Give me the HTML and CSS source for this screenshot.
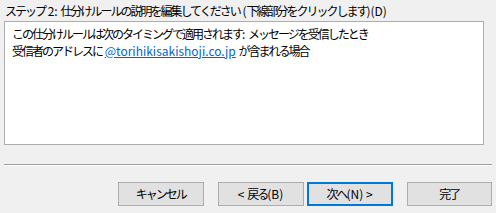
FILE: index.html
```html
<!DOCTYPE html>
<html lang="ja">
<head>
<meta charset="utf-8">
<link rel="stylesheet" href="styles.css">
</head>
<body>
<div class="dialog">
  <div class="label"><span class="ja">ステップ</span> 2: <span class="ja">仕分けルールの説明を編集してください</span> (<span class="ja">下線部分をクリックします</span>)(D)</div>
  <div class="box">
    <div class="line"><span class="ja">この仕分けルールは次のタイミングで適用されます</span>: <span class="ja">メッセージを受信したとき</span></div>
    <div class="line"><span class="ja">受信者のアドレスに</span> <a class="link">@torihikisakishoji.co.jp</a> <span class="ja">が含まれる場合</span></div>
  </div>
  <div class="sep"></div>
  <div class="buttons">
    <button class="btn"><span class="ja">キャンセル</span></button>
    <div class="pair">
      <button class="btn">&lt; <span class="ja">戻る</span>(B)</button>
      <button class="btn default"><span class="ja">次へ</span>(N) &gt;</button>
    </div>
    <button class="btn"><span class="ja">完了</span></button>
  </div>
</div>
</body>
</html>
```
FILE: styles.css
```css
html, body {
  margin: 0;
  padding: 0;
  background: #f0f0f0;
}
body {
  width: 496px;
  height: 213px;
  overflow: hidden;
  font-family: "Noto Sans CJK JP", "Noto Sans", sans-serif;
  font-size: 12px;
  color: #000;
}
.ja {
  letter-spacing: -2px;
}
.dialog {
  padding: 0 4px 0 4px;
}
.label {
  height: 21px;
  line-height: 21px;
  padding-left: 1px;
  white-space: nowrap;
}
.box {
  box-sizing: border-box;
  width: 480px;
  height: 124px;
  border: 1px solid #adadad;
  background: #fff;
  padding: 3px 0 0 7px;
}
.line {
  height: 17px;
  line-height: 17px;
  white-space: nowrap;
}
.link {
  color: #0066cc;
  text-decoration: underline;
}
.sep {
  margin-top: 19px;
  width: 488px;
  height: 1px;
  background: #a0a0a0;
  border-bottom: 1px solid #fff;
}
.buttons {
  display: flex;
  margin-top: 16px;
  margin-left: 114px;
  gap: 14px;
}
.pair {
  display: flex;
  gap: 3px;
}
.btn {
  width: 86px;
  height: 24px;
  box-sizing: border-box;
  background: #e1e1e1;
  border: 1px solid #adadad;
  font-family: "Noto Sans CJK JP", "Noto Sans", sans-serif;
  font-size: 12px;
  color: #000;
  padding: 0;
  margin: 0;
  line-height: 20px;
}
.btn.default {
  border: 2px solid #0078d7;
}
```
